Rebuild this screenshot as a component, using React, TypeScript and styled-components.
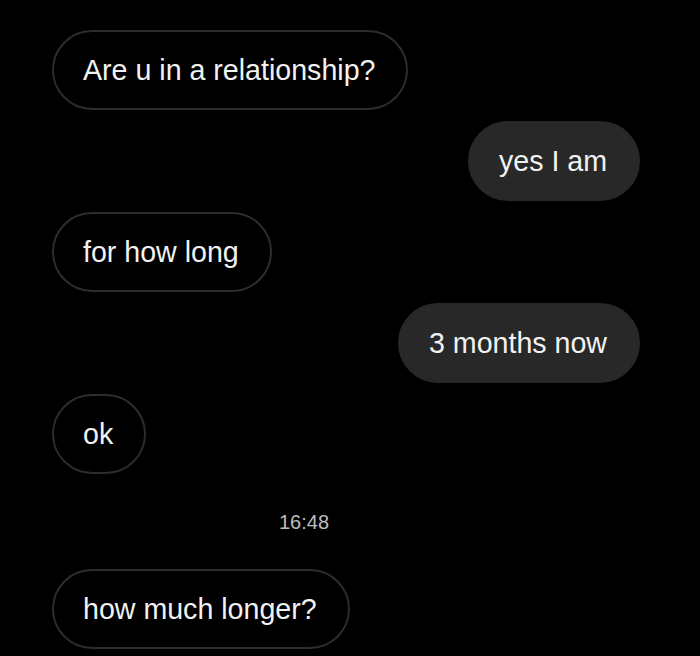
import React from "react";
import styled, { createGlobalStyle } from "styled-components";

type Side = "in" | "out";

interface Message {
  id: number;
  side: Side;
  text: string;
}

const messages: Message[] = [
  { id: 1, side: "in", text: "Are u in a relationship?" },
  { id: 2, side: "out", text: "yes I am" },
  { id: 3, side: "in", text: "for how long" },
  { id: 4, side: "out", text: "3 months now" },
  { id: 5, side: "in", text: "ok" },
];

const GlobalStyle = createGlobalStyle`
  html, body {
    margin: 0;
    padding: 0;
    background: #000000;
  }
  body {
    font-family: "Liberation Sans", Arial, sans-serif;
    -webkit-font-smoothing: antialiased;
  }
`;

const App: React.FC = () => {
  return (
    <>
      <GlobalStyle />
      <Screen>
        <Thread>
          {messages.map((m) => (
            <Row key={m.id} side={m.side}>
              <Bubble side={m.side}>{m.text}</Bubble>
            </Row>
          ))}
          <Timestamp>16:48</Timestamp>
          <Row side="in">
            <Bubble side="in">how much longer?</Bubble>
          </Row>
        </Thread>
      </Screen>
    </>
  );
};

export default App;

const Screen = styled.div`
  width: 700px;
  height: 656px;
  background: #000000;
  overflow: hidden;
`;

const Thread = styled.div`
  display: flex;
  flex-direction: column;
  gap: 11px;
  padding: 30px 60px 0 52px;
`;

const Row = styled.div<{ side: Side }>`
  display: flex;
  justify-content: ${({ side }) => (side === "out" ? "flex-end" : "flex-start")};
`;

const Bubble = styled.div<{ side: Side }>`
  box-sizing: border-box;
  height: 80px;
  padding: 1px 31px 0 29px;
  display: inline-flex;
  align-items: center;
  border-radius: 40px;
  font-size: 28.6px;
  color: #f2f2f2;
  white-space: nowrap;
  background: ${({ side }) => (side === "out" ? "#282828" : "#000000")};
  border: 2px solid ${({ side }) => (side === "out" ? "#282828" : "#2c2c2c")};
`;

const Timestamp = styled.div`
  padding: 25px 0 24px 227px;
  font-size: 20px;
  line-height: 24px;
  color: #bdbdbd;
`;
